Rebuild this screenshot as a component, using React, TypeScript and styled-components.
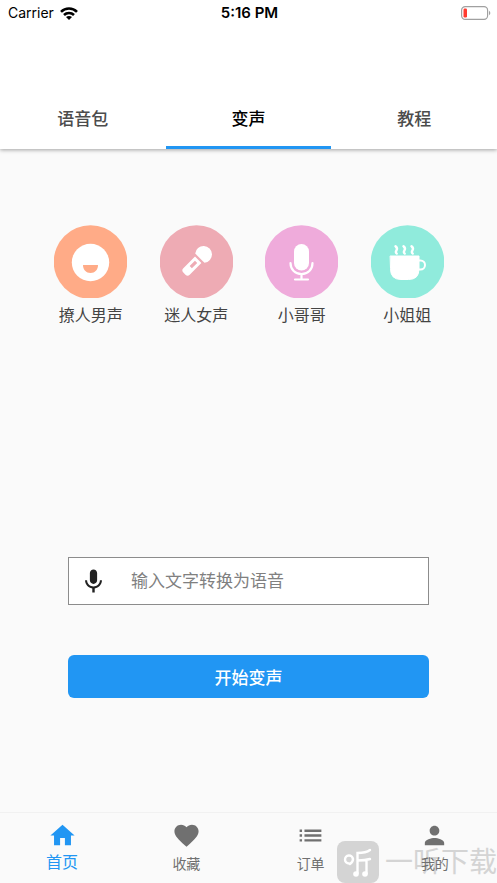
import React from "react";
import styled, { createGlobalStyle } from "styled-components";
import { MdFavorite, MdHome, MdList, MdMic, MdPerson } from "react-icons/md";

const GlobalStyle = createGlobalStyle`
  *, *::before, *::after { box-sizing: border-box; }
  body {
    margin: 0;
    background: #fafafa;
    font-family: Inter, "Noto Sans CJK SC", sans-serif;
    color: #333;
  }
  button, input { font-family: inherit; }
`;

const Screen = styled.div`
  position: relative;
  display: flex;
  flex-direction: column;
  min-height: 100vh;
  background: #fafafa;
`;

const Header = styled.header`
  background: #fff;
  box-shadow: 0 1px 4px rgba(0, 0, 0, 0.36);
`;

const StatusBar = styled.div`
  display: grid;
  grid-template-columns: 1fr auto 1fr;
  align-items: center;
  height: 26px;
  padding: 0 6px 0 8px;
  font-size: 14px;
  line-height: 20px;
  color: #000;
`;

const Carrier = styled.span`
  display: flex;
  align-items: center;
  gap: 6px;
`;

const Clock = styled.time`
  font-size: 15px;
  font-weight: 600;
`;

const Battery = styled.svg`
  justify-self: end;
`;

const Tabs = styled.div`
  display: grid;
  grid-template-columns: repeat(3, 1fr);
  padding-top: 62px;
`;

const Tab = styled.button<{ $active?: boolean }>`
  height: 61px;
  padding: 4px 0 0;
  border: 0;
  border-bottom: 3px solid ${(p) => (p.$active ? "#2196f3" : "transparent")};
  background: none;
  color: ${(p) => (p.$active ? "#000" : "#4c4c4c")};
  font-size: 17px;
  font-weight: 500;
  line-height: 24px;
`;

const Main = styled.main`
  flex: 1;
  display: flex;
  flex-direction: column;
`;

const Voices = styled.div`
  display: grid;
  grid-template-columns: repeat(4, 1fr);
  padding: 76px 37px 0 38px;
`;

const Voice = styled.button`
  display: flex;
  flex-direction: column;
  align-items: center;
  gap: 5px;
  padding: 0;
  border: 0;
  background: none;
  color: #444;
  font-size: 16px;
  line-height: 24px;
  font-weight: 400;
`;

const Form = styled.form`
  display: flex;
  flex-direction: column;
  gap: 50px;
  margin-top: auto;
  padding: 0 68px 114px;
`;

const Field = styled.label`
  display: flex;
  align-items: center;
  gap: 23px;
  height: 48px;
  padding-left: 10px;
  border: 1px solid #8c8c8c;
  background: #fff;
  color: #222;
`;

const TextInput = styled.input`
  flex: 1;
  min-width: 0;
  height: 44px;
  padding: 0;
  border: 0;
  outline: 0;
  background: none;
  color: #222;
  font-size: 17px;
  font-weight: 400;
  &::placeholder { color: #808080; opacity: 1; }
`;

const Submit = styled.button`
  height: 43px;
  border: 0;
  border-radius: 6px;
  background: #2196f3;
  color: #fff;
  font-size: 17px;
  font-weight: 500;
`;

const BottomNav = styled.nav`
  display: grid;
  grid-template-columns: repeat(4, 1fr);
  height: 71px;
  border-top: 1px solid #f1f1f1;
`;

const NavItem = styled.a<{ $active?: boolean }>`
  z-index: 1;
  display: flex;
  flex-direction: column;
  align-items: center;
  padding-top: 8px;
  color: ${(p) => (p.$active ? "#2196f3" : "#707070")};
  font-size: ${(p) => (p.$active ? 16 : 14)}px;
  font-weight: 400;
  line-height: ${(p) => (p.$active ? 24 : 28)}px;
  text-decoration: none;
`;

const Watermark = styled.div`
  position: absolute;
  right: 0;
  bottom: 0;
  display: flex;
  align-items: center;
  gap: 6px;
  color: #d4d4d4;
  font-size: 28px;
  line-height: 42px;
  pointer-events: none;
`;

const WifiIcon = () => (
  <svg width="18" height="13" viewBox="0 0 18 13" aria-hidden="true">
    <g fill="none" stroke="#000" strokeWidth="2.6">
      <path d="M1 4.800C5.400.4 12.600.4 17 4.800" />
      <path d="M4 8c2.800-2.700 7.200-2.700 10 0" />
    </g>
    <path d="M6 10c1.700-1.500 4.300-1.500 6 0l-3 3z" />
  </svg>
);

const BatteryIcon = () => (
  <Battery width="30" height="14" viewBox="0 0 30 14" role="img" aria-label="Battery low">
    <rect x="0.6" y="0.6" width="26" height="12.8" rx="3.6" fill="#fff" stroke="#a0a0a0" strokeWidth="1.2" />
    <rect x="2.5" y="2.5" width="3.5" height="9" rx="1.2" fill="#ff3b30" />
    <path d="M28 4.800c1.800.7 1.800 3.700 0 4.400z" fill="#a0a0a0" />
  </Battery>
);

const Smile = () => (
  <>
    <circle cx="36.5" cy="37.5" r="18.7" fill="#fff" />
    <path d="M29 40h15c0 4.800-3.200 8-7.500 8S29 44.800 29 40z" fill="#ffab87" />
  </>
);

const HandMic = () => (
  <g transform="translate(43.5 29.5) rotate(45)" fill="#fff">
    <path d="M-6.500 5.200A8.400 8.400 0 1 1 6.500 5.200z" />
    <path fillRule="evenodd" d="M-4.500 7.500h9v16.500q0 3-3 3h-3q-3 0-3-3zM-1.600 10.500v7.500h3.200v-7.500z" />
  </g>
);

const StudioMic = () => (
  <g fill="none" stroke="#fff" strokeWidth="2.2" strokeLinecap="round">
    <rect x="29" y="19" width="15" height="26.5" rx="7.5" fill="#fff" stroke="none" />
    <path d="M25.500 38c0 6.500 4.700 11 11 11s11-4.500 11-11M36.500 49v5M30 54.500h13" />
  </g>
);

const Cup = () => (
  <g fill="none" stroke="#fff" strokeLinecap="round">
    <path d="M19.500 31h28.500v13q0 10.500-10.500 10.500h-7.500q-10.500 0-10.500-10.500z" fill="#fff" />
    <path d="M48 35.500h1.500a4.500 4.500 0 0 1 0 9H47" strokeWidth="2" />
    <path
      d="M24.500 21.300q2.400 1.800 1 4t.2 3.200M32.500 21.300q2.400 1.800 1 4t.2 3.200M40.500 21.300q2.400 1.800 1 4t.2 3.200"
      strokeWidth="2.4"
    />
  </g>
);

const voices = [
  { name: "撩人男声", color: "#ffab87", Icon: Smile },
  { name: "迷人女声", color: "#eeabb4", Icon: HandMic },
  { name: "小哥哥", color: "#efabdb", Icon: StudioMic },
  { name: "小姐姐", color: "#90ebdc", Icon: Cup },
];

const navItems = [
  { name: "首页", Icon: MdHome, active: true },
  { name: "收藏", Icon: MdFavorite },
  { name: "订单", Icon: MdList },
  { name: "我的", Icon: MdPerson },
];

export default function App() {
  return (
    <Screen>
      <GlobalStyle />
      <Header>
        <StatusBar>
          <Carrier>Carrier <WifiIcon /></Carrier>
          <Clock>5:16 PM</Clock>
          <BatteryIcon />
        </StatusBar>
        <Tabs role="tablist">
          <Tab role="tab" aria-selected={false}>语音包</Tab>
          <Tab role="tab" aria-selected $active>变声</Tab>
          <Tab role="tab" aria-selected={false}>教程</Tab>
        </Tabs>
      </Header>
      <Main>
        <Voices>
          {voices.map(({ name, color, Icon }) => (
            <Voice key={name} type="button">
              <svg width="73" height="73" viewBox="0 0 73 73" aria-hidden="true">
                <circle cx="36.5" cy="37" r="36.8" fill={color} />
                <Icon />
              </svg>
              {name}
            </Voice>
          ))}
        </Voices>
        <Form onSubmit={(e) => e.preventDefault()}>
          <Field>
            <MdMic size={29} aria-hidden="true" />
            <TextInput aria-label="输入文字转换为语音" placeholder="输入文字转换为语音" />
          </Field>
          <Submit type="submit">开始变声</Submit>
        </Form>
      </Main>
      <BottomNav>
        {navItems.map(({ name, Icon, active }) => (
          <NavItem key={name} href="#" $active={active}>
            <Icon size={29} aria-hidden="true" />
            {name}
          </NavItem>
        ))}
      </BottomNav>
      <Watermark aria-hidden="true">
        <svg width="42" height="42" viewBox="0 0 42 42">
          <rect width="42" height="42" rx="8" fill="#d4d4d4" />
          <g fill="none" stroke="#fff" strokeWidth="2.4" strokeLinecap="round">
            <path d="M12 22.500a4 4 0 1 1 4-4.500q0 3-3 5" />
            <path d="M33 9q-4 3-12.500 3v20M21 19.500q7 0 12-1.500M29.500 19.500v13" />
          </g>
          <g fill="#fff">
            <circle cx="19" cy="33" r="2.8" />
            <circle cx="28" cy="33" r="2.8" />
          </g>
        </svg>
        一听下载
      </Watermark>
    </Screen>
  );
}
